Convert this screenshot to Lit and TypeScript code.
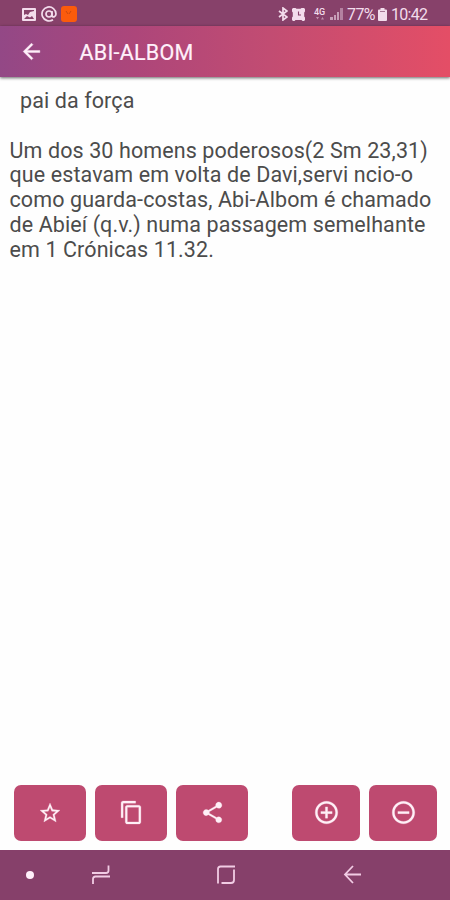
import { LitElement, html, css, svg } from "lit";
import { customElement } from "lit/decorators.js";

const star = svg`<path d="M22 9.24l-7.19-.62L12 2 9.19 8.63 2 9.24l5.46 4.73L5.82 21 12 17.27 18.18 21l-1.63-7.03L22 9.24zM12 15.4l-3.76 2.27 1-4.28-3.32-2.88 4.38-.38L12 6.1l1.71 4.04 4.38.38-3.32 2.88 1 4.28L12 15.4z"/>`;
const copy = svg`<path d="M16 1H4c-1.1 0-2 .9-2 2v14h2V3h12V1zm3 4H8c-1.1 0-2 .9-2 2v14c0 1.1.9 2 2 2h11c1.1 0 2-.9 2-2V7c0-1.1-.9-2-2-2zm0 16H8V7h11v14z"/>`;
const share = svg`<path d="M18 16.08c-.76 0-1.44.3-1.96.77L8.91 12.7c.05-.23.09-.46.09-.7s-.04-.47-.09-.7l7.05-4.11c.54.5 1.25.81 2.04.81 1.66 0 3-1.34 3-3s-1.34-3-3-3-3 1.34-3 3c0 .24.04.47.09.7L8.04 9.81C7.5 9.31 6.79 9 6 9c-1.66 0-3 1.34-3 3s1.34 3 3 3c.79 0 1.5-.31 2.04-.81l7.12 4.16c-.05.21-.08.43-.08.65 0 1.61 1.31 2.92 2.92 2.92s2.92-1.31 2.92-2.92-1.31-2.92-2.92-2.92z"/>`;
const plus = svg`<path d="M13 7h-2v4H7v2h4v4h2v-4h4v-2h-4V7zm-1-5C6.48 2 2 6.48 2 12s4.48 10 10 10 10-4.48 10-10S17.52 2 12 2zm0 18c-4.41 0-8-3.59-8-8s3.59-8 8-8 8 3.59 8 8-3.59 8-8 8z"/>`;
const minus = svg`<path d="M7 11v2h10v-2H7zm5-9C6.48 2 2 6.48 2 12s4.48 10 10 10 10-4.48 10-10S17.52 2 12 2zm0 18c-4.41 0-8-3.59-8-8s3.59-8 8-8 8 3.59 8 8-3.59 8-8 8z"/>`;
const back = svg`<path d="M20 11H7.83l5.59-5.59L12 4l-8 8 8 8 1.41-1.41L7.83 13H20v-2z"/>`;

@customElement("app-root")
export class AppRoot extends LitElement {
  static styles = css`
    :host {
      display: flex;
      flex-direction: column;
      width: 450px;
      height: 900px;
      background: #fefefe;
      font-family: Roboto, "Noto Sans", sans-serif;
      overflow: hidden;
    }
    svg { display: block; fill: currentColor; flex: none; }
    .status {
      height: 26px;
      box-sizing: border-box;
      padding: 2px 23px 0 22px;
      display: flex;
      align-items: center;
      background: #87416a;
      color: #f3dcec;
      font-size: 16px;
      flex: none;
    }
    .notes { display: flex; gap: 5px; align-items: center; }
    .notes svg + svg + svg { margin-left: -1px; }
    .state { margin-left: auto; display: flex; align-items: center; }
    .percent { margin-left: 4px; width: 27px; letter-spacing: -0.6px; }
    .battery { margin-left: 4px; }
    .clock { margin-left: 4px; width: 36px; letter-spacing: -0.7px; white-space: nowrap; }
    .bt { margin-right: 4px; }
    .net { margin: 0 4px 0 8px; width: 13px; display: flex; flex-direction: column; align-items: center; }
    .net span { font-size: 9px; line-height: 9px; font-weight: 500; }
    .bar {
      height: 51px;
      flex: none;
      display: flex;
      align-items: center;
      padding-left: 19px;
      background: linear-gradient(90deg, #934886 0%, #ad467a 30%, #c24c72 60%, #e44e66 100%);
      box-shadow: 0 1px 3px #0009;
      color: #fff0fa;
      z-index: 1;
    }
    h1 {
      margin: 3px 0 0 35.5px;
      font-size: 21.5px;
      line-height: 26px;
      font-weight: 400;
      letter-spacing: 0.25px;
      -webkit-text-stroke: 0.2px currentColor;
    }
    main {
      flex: 1;
      padding: 12px 0 0 9.5px;
      color: #4c4c4c;
      font-size: 21.5px;
      line-height: 24.8px;
      letter-spacing: 0.1px;
      white-space: nowrap;
    }
    p { margin: 0 0 24.8px; }
    .meaning { padding-left: 10.5px; }
    .actions { display: flex; padding: 0 13px 9.5px 14px; gap: 9px; flex: none; }
    .action {
      width: 72px;
      height: 55.5px;
      border-radius: 7px;
      background: #be4a70;
      color: #fff0f7;
      display: flex;
      align-items: center;
      justify-content: center;
      padding: 0;
      border: 0;
    }
    .zoom { width: 68px; }
    .first { margin-left: auto; }
    nav {
      height: 50px;
      flex: none;
      display: flex;
      align-items: center;
      background: #86406a;
      color: #f1cce4;
    }
    nav svg { fill: none; stroke: currentColor; stroke-width: 1.8; }
    .dot { width: 8px; height: 8px; border-radius: 50%; background: #fff0fa; margin-left: 26px; }
    .recent { margin-left: 57px; }
    .home { margin-left: 105px; }
    .return { margin-left: 107px; }
  `;

  private action(icon: unknown, label: string, size = 24, extra = "") {
    return html`<button class="action ${extra}" aria-label=${label}>
      <svg width=${size} height=${size} viewBox="0 0 24 24" stroke="currentColor" stroke-width=".25">${icon}</svg>
    </button>`;
  }

  render() {
    return html`
      <div class="status">
        <div class="notes">
          <svg width="14" height="13" viewBox="0 0 14 13"><path fill-rule="evenodd" d="M1 0h12q1 0 1 1v11q0 1-1 1H1q-1 0-1-1V1q0-1 1-1zM2 2v5l2-1 2 1 2-3 4-1V2zM2 11h10L10 8 8 9.5 5 8z"/></svg>
          <svg width="16" height="16" viewBox="0 0 16 16"><g fill="none" stroke="currentColor" stroke-width="1.7"><circle cx="8" cy="8" r="3"/><path d="M11 5v4q0 2 2 2q2-1 2-3A7 7 0 1 0 12 13.7"/></g></svg>
          <svg width="16" height="16" viewBox="0 0 16 16"><rect width="16" height="16" rx="3" fill="#fb5b0c"/><path d="M5 5l2 3M10 5l-2 3" stroke="#c9480f" fill="none"/></svg>
        </div>
        <div class="state">
          <svg class="bt" width="10" height="14" viewBox="0 0 10 14"><path d="M1 4l8 6-4 3V1l4 3-8 6" fill="none" stroke="currentColor" stroke-width="1.7"/></svg>
          <svg width="13" height="13" viewBox="0 0 13 13"><path d="M1 0h2.5l1 .8h4L9.500 0H12l1 1v2.500l-.8 1v4l.8 1V12l-1 1h-1.500l-1-1h-6l-1 1H1l-1-1V9.500l.8-1v-4L0 3.500V1z"/><path d="M6.500 3.500V7H9" fill="none" stroke="#87416a" stroke-width="1.100"/></svg>
          <div class="net">
            <span>4G</span>
            <svg width="8" height="3" viewBox="0 0 8 3"><path d="M0 0h3L1.5 2.5zM5 2.5h3L6.5 0z" opacity=".5"/></svg>
          </div>
          <svg width="13" height="12" viewBox="0 0 13 12"><g opacity=".6"><path d="M0 9h3v3H0zM4 7h2v5H4zM7 4h2v8H7z"/><path d="M10 0h3v12h-3z" opacity=".7"/></g></svg>
          <span class="percent">77%</span>
          <svg class="battery" width="9" height="13" viewBox="0 0 9 13"><path d="M2.5 0h4v1.5H8q1 0 1 1V12q0 1-1 1H1q-1 0-1-1V2.5q0-1 1-1h1.5z"/><path d="M2 3.5h5" stroke="#a77795"/></svg>
          <span class="clock">10:42</span>
        </div>
      </div>
      <header class="bar">
        <svg width="25" height="25" viewBox="0 0 24 24" stroke="currentColor" stroke-width=".4">${back}</svg>
        <h1>ABI-ALBOM</h1>
      </header>
      <main>
        <p class="meaning">pai da força</p>
        <p>Um dos 30 homens poderosos(2 Sm 23,31)<br />que estavam em volta de Davi,servi ncio-o<br />como guarda-costas, Abi-Albom é chamado<br />de Abieí (q.v.) numa passagem semelhante<br />em 1 Crónicas 11.32.</p>
      </main>
      <div class="actions">
        ${this.action(star, "Favorito")}
        ${this.action(copy, "Copiar", 25)}
        ${this.action(share, "Compartilhar", 25)}
        ${this.action(plus, "Aumentar", 27, "zoom first")}
        ${this.action(minus, "Diminuir", 27, "zoom")}
      </div>
      <nav>
        <span class="dot"></span>
        <svg class="recent" width="20" height="20" viewBox="0 0 20 20"><path d="M1 8h14q2.5 0 2.5-2.5V.5M19 11.5H4.5Q2 11.5 2 14v5"/></svg>
        <svg class="home" width="20" height="20" viewBox="0 0 20 20"><path d="M2 18.5V4q0-2.5 2.5-2.5H19M5.5 18H15q3 0 3-3V4.5"/></svg>
        <svg class="return" width="20" height="20" viewBox="0 0 20 20"><path d="M10 1L2 9.5l8 8.5M2 9.5h16"/></svg>
      </nav>
    `;
  }
}
